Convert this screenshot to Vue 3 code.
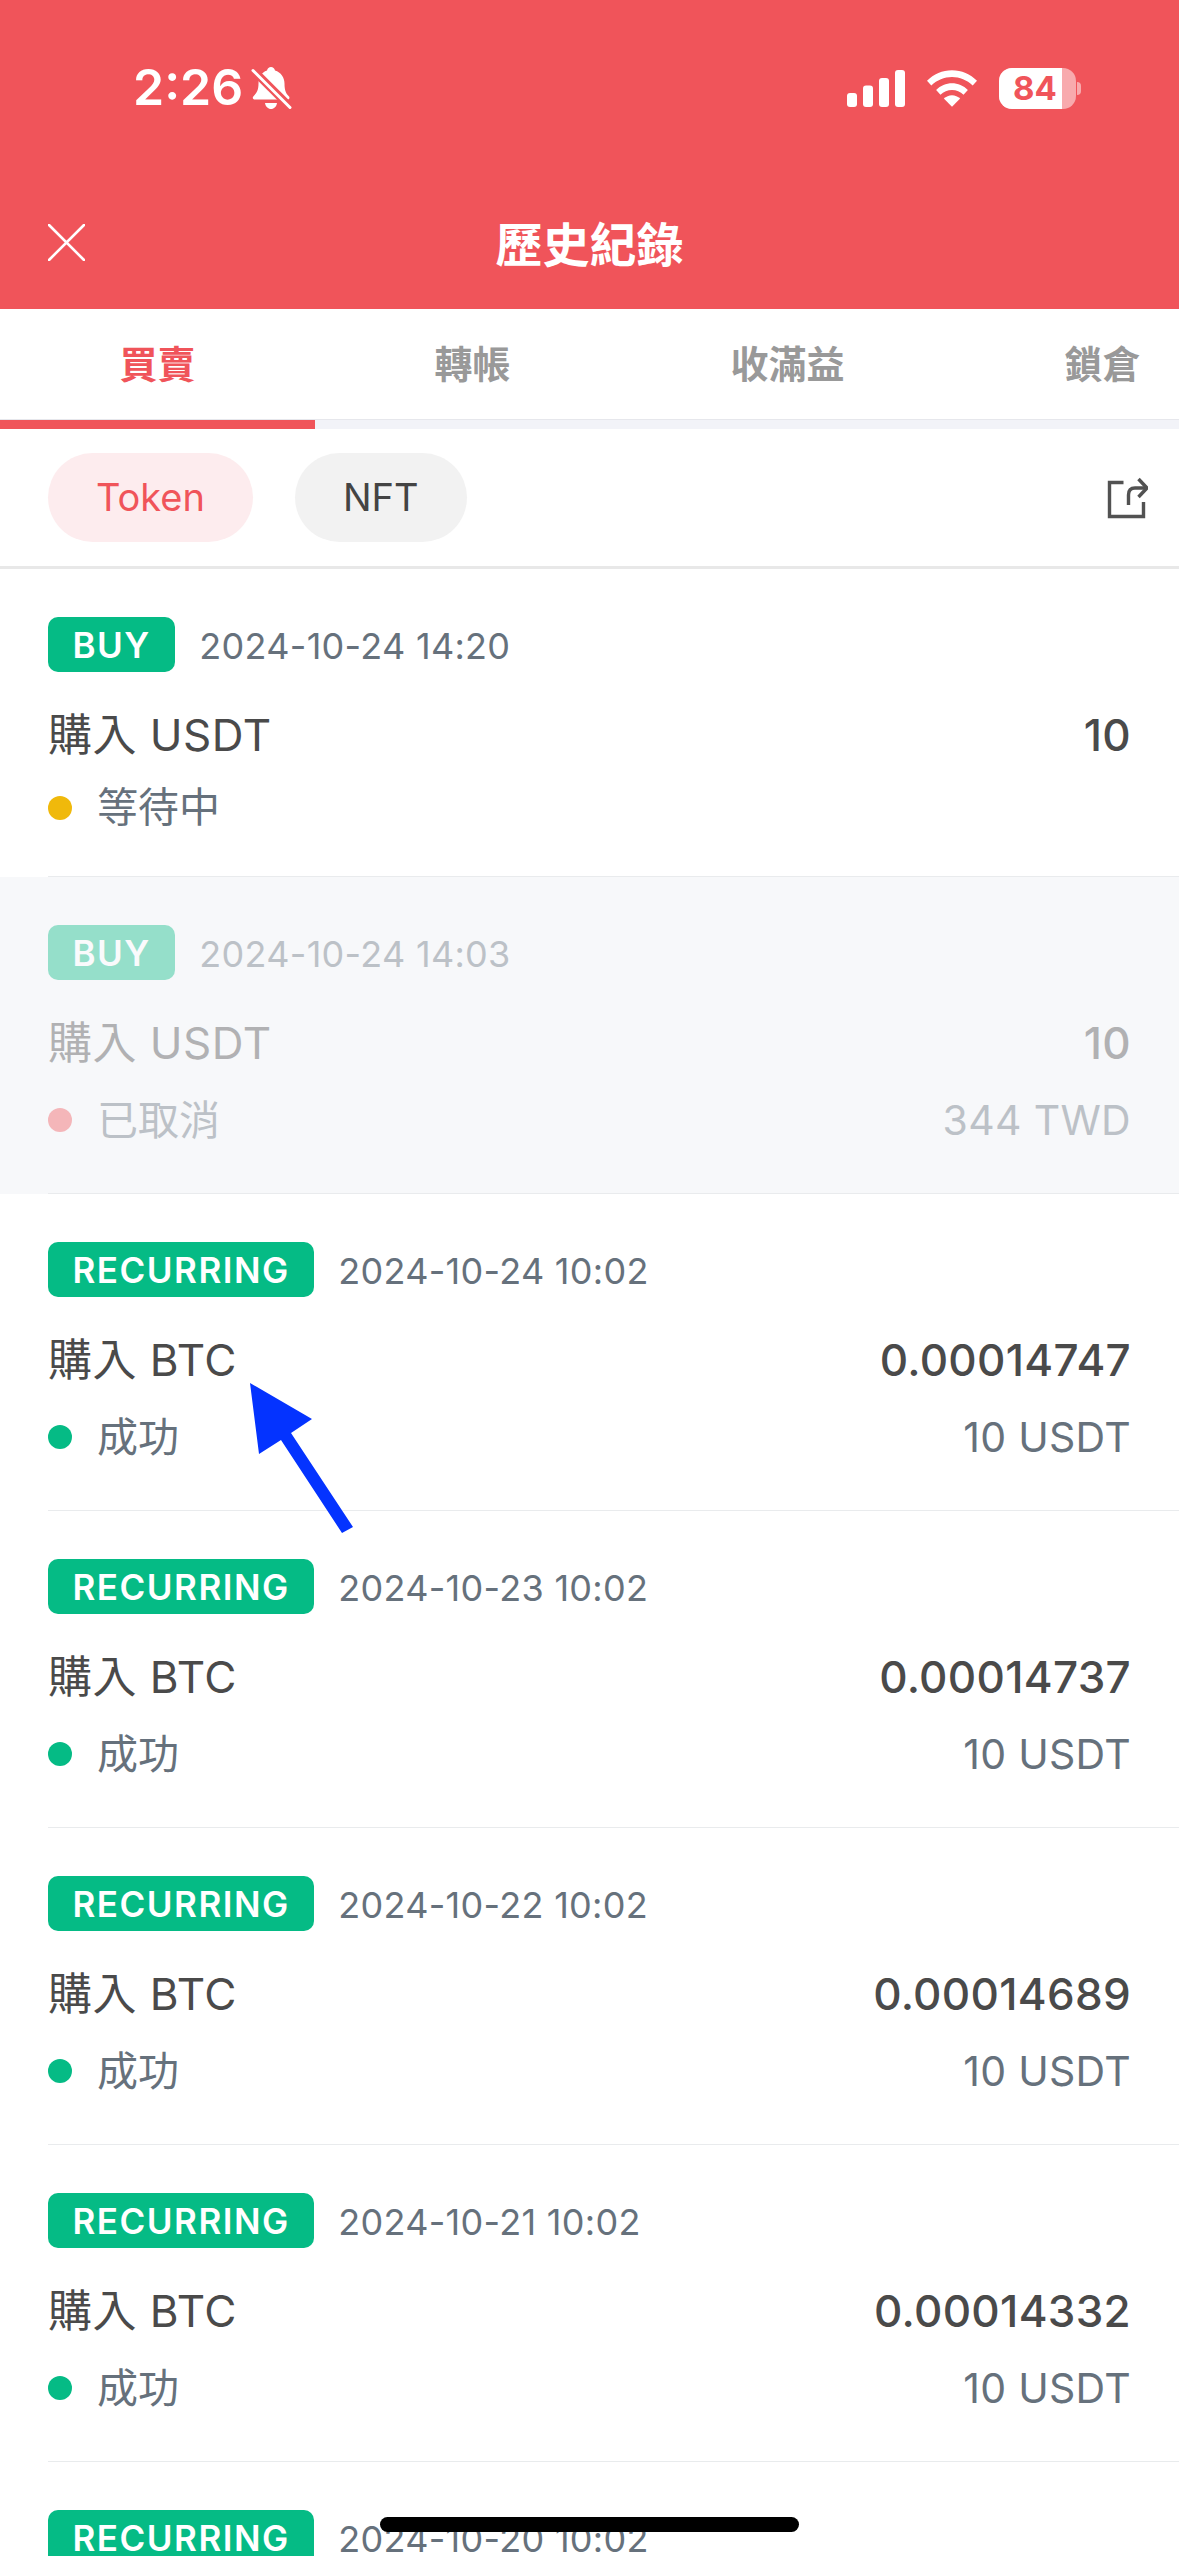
<template>
  <div class="page">
    <div class="header">
      <div class="status">
        <div class="status-left">
          <span class="clock">2:26</span>
          <svg class="bell" width="42" height="44" viewBox="0 0 42 44">
            <path d="M21 0c2 0 3.500 1.300 4 3.500 6 1.800 9.500 7 9.500 13 0 7 1.500 10 4.500 13 1 1 .3 3-1.500 3H5c-2 0-3-2-1.500-3.300 3-3 5-6 5-12.700 0-6 3-11.200 8.500-13 .5-2.200 2-3.500 4-3.500z" fill="#fff"/>
            <path d="M15 36h12c-.5 3.500-3 6-6 6s-5.500-2.500-6-6z" fill="#fff"/>
            <path d="M-2-2 44 44" stroke="#f0545a" stroke-width="8"/>
            <path d="M3 3.500 40 40.500" stroke="#fff" stroke-width="3" stroke-linecap="round"/>
          </svg>
        </div>
        <div class="status-right">
          <svg width="58" height="37" viewBox="0 0 58 37">
            <rect x="0" y="23" width="10" height="14" rx="3" fill="#fff"/>
            <rect x="16" y="15.500" width="10" height="21.500" rx="3" fill="#fff"/>
            <rect x="32" y="8" width="10" height="29" rx="3" fill="#fff"/>
            <rect x="48" y="0" width="10" height="37" rx="3" fill="#fff"/>
          </svg>
          <svg width="50" height="37" viewBox="0 0 52 38">
            <path d="M0 11C7 4 16 0 26 0s19 4 26 11l-4.500 5C41.500 10 34 7 26 7S10.500 10 4.500 16z" fill="#fff"/>
            <path d="M9.500 20.500C14 16 20 13.500 26 13.500s12 2.500 16.500 7L38 25.500C34.800 22.400 30.500 20.500 26 20.500s-8.800 1.900-12 5z" fill="#fff"/>
            <path d="M17.500 29.500c2.300-2.200 5.400-3.500 8.500-3.500s6.200 1.300 8.500 3.500L26 38z" fill="#fff"/>
          </svg>
          <div class="battery">
            <div class="battery-body">
              <span class="battery-fill"></span>
              <span class="battery-num">84</span>
            </div>
            <span class="battery-cap"></span>
          </div>
        </div>
      </div>
      <div class="nav">
        <svg class="close" width="37" height="37" viewBox="0 0 37 37">
          <path d="M1 1 36 36M36 1 1 36" stroke="#fff" stroke-width="2.600" stroke-linecap="round" fill="none"/>
        </svg>
        <span class="nav-title">歷史紀錄</span>
      </div>
    </div>

    <div class="tabs">
      <div v-for="tab in tabs" :key="tab" class="tab" :class="{ active: tab === '買賣' }">
        {{ tab }}
      </div>
    </div>

    <div class="filters">
      <div class="pill pill-on">Token</div>
      <div class="pill">NFT</div>
      <svg class="share" width="43" height="45" viewBox="0 0 43 45" fill="none" stroke="#525252" stroke-width="3.400">
        <path d="M18.500 7.500H4.500V41.500H38.500V27"/>
        <path d="M23.500 30V20Q23.500 13 30 13H40"/>
        <path d="M33.500 4 42 13 33.500 22"/>
      </svg>
    </div>

    <div class="list">
      <div v-for="item in rows" :key="item.time" class="row" :class="{ cancelled: item.state === 'cancelled' }">
        <div class="row-top">
          <span class="badge">{{ item.type }}</span>
          <span class="time">{{ item.time }}</span>
        </div>
        <template v-if="item.title">
          <div class="row-main">
            <span class="title">{{ item.title }}</span>
            <span class="amount">{{ item.amount }}</span>
          </div>
          <div class="row-sub">
            <span class="state">
              <i class="dot" :class="item.state"></i>{{ item.label }}
            </span>
            <span v-if="item.total" class="total">{{ item.total }}</span>
          </div>
        </template>
      </div>
    </div>

    <svg class="arrow" width="110" height="150" viewBox="0 0 110 150">
      <path d="M0 0 62 36 41 50 103 144 92 150 31 57 9 71z" fill="#0433ff"/>
    </svg>
    <div class="home-bar"></div>
  </div>
</template>

<script setup>
const tabs = ['買賣', '轉帳', '收滿益', '鎖倉'];

const recurring = (time, amount) => ({
  type: 'RECURRING',
  time,
  title: '購入 BTC',
  amount,
  state: 'ok',
  label: '成功',
  total: '10 USDT',
});

const rows = [
  { type: 'BUY', time: '2024-10-24 14:20', title: '購入 USDT', amount: '10', state: 'pending', label: '等待中', total: '' },
  { type: 'BUY', time: '2024-10-24 14:03', title: '購入 USDT', amount: '10', state: 'cancelled', label: '已取消', total: '344 TWD' },
  recurring('2024-10-24 10:02', '0.00014747'),
  recurring('2024-10-23 10:02', '0.00014737'),
  recurring('2024-10-22 10:02', '0.00014689'),
  recurring('2024-10-21 10:02', '0.00014332'),
  { type: 'RECURRING', time: '2024-10-20 10:02' },
];
</script>

<style>
html,
body {
  margin: 0;
  background: #fff;
}
</style>

<style scoped>
.page {
  position: relative;
  width: 1179px;
  height: 2556px;
  overflow: hidden;
  background: #fff;
  font-family: Inter, "Noto Sans CJK TC", sans-serif;
}

.header {
  height: 309px;
  background: #f0545a;
  color: #fff;
  display: flex;
  flex-direction: column;
}

.status {
  height: 130px;
  padding: 0 98px 0 133px;
  display: flex;
  align-items: center;
  justify-content: space-between;
  box-sizing: border-box;
}

.status-left {
  display: flex;
  align-items: center;
  gap: 7px;
  padding-top: 44px;
}

.bell {
  margin-top: 3px;
}

.clock {
  font-size: 50px;
  font-weight: 600;
  line-height: 1;
}

.status-right {
  display: flex;
  align-items: center;
  gap: 22px;
  padding-top: 46px;
}

.battery {
  display: flex;
  align-items: center;
  gap: 1px;
}

.battery-body {
  position: relative;
  width: 77px;
  height: 41px;
  border-radius: 13px;
  background: rgba(255, 255, 255, 0.5);
  overflow: hidden;
}

.battery-fill {
  position: absolute;
  left: 0;
  top: 0;
  bottom: 0;
  width: 63px;
  background: #fff;
}

.battery-num {
  position: absolute;
  left: 14px;
  top: 0;
  font-size: 33px;
  line-height: 41px;
  font-weight: 700;
  color: #f0545a;
}

.battery-cap {
  width: 4px;
  height: 13px;
  border-radius: 0 4px 4px 0;
  background: rgba(255, 255, 255, 0.5);
}

.nav {
  flex: 1;
  display: grid;
  grid-template-columns: 1fr auto 1fr;
  align-items: center;
  padding: 46px 0 0 48px;
  margin-right: 48px;
}

.nav-title {
  font-size: 47px;
  font-weight: 700;
  margin-top: -2px;
}

.tabs {
  height: 120px;
  box-sizing: border-box;
  display: flex;
  background: #fff;
  border-bottom: 9px solid #f2f3f8;
  box-shadow: inset 0 -1px 0 #e6e7ec;
}

.tab {
  width: 315px;
  text-align: center;
  font-size: 38px;
  font-weight: 700;
  line-height: 111px;
  color: #999;
  flex: none;
  position: relative;
}

.tab.active {
  color: #f0545a;
}

.tab.active::after {
  content: "";
  position: absolute;
  left: 0;
  right: 0;
  bottom: -9px;
  height: 9px;
  background: #f0545a;
}

.filters {
  height: 140px;
  padding: 0 31px 0 48px;
  box-sizing: border-box;
  display: flex;
  align-items: center;
  gap: 42px;
  border-bottom: 3px solid #e8e8e8;
}

.pill {
  height: 89px;
  padding: 0 48px;
  border-radius: 45px;
  background: #f2f2f2;
  color: #444;
  font-size: 38px;
  line-height: 89px;
}

.pill-on {
  background: #fdecee;
  color: #f0545a;
}

.share {
  margin-left: auto;
}

.row {
  padding: 48px 48px 46px;
  position: relative;
}

.row::after {
  content: "";
  position: absolute;
  left: 48px;
  right: 0;
  bottom: 0;
  height: 1px;
  background: #e9ebed;
}

.row.cancelled {
  background: #f7f8fa;
}

.row-top {
  display: flex;
  align-items: center;
  gap: 24px;
}

.badge {
  height: 55px;
  padding: 0 24.500px;
  border-radius: 10px;
  background: #05bb85;
  color: #fff;
  font-size: 35px;
  font-weight: 600;
  letter-spacing: 1.500px;
  line-height: 57px;
}

.time {
  font-size: 36px;
  letter-spacing: 0.300px;
  padding-top: 2px;
  color: #66717c;
}

.row-main {
  display: flex;
  justify-content: space-between;
  margin-top: 33px;
  font-size: 44px;
  line-height: 60px;
  color: #4a4a4a;
}

.title {
  letter-spacing: 0.500px;
}

.amount {
  font-weight: 500;
  letter-spacing: 0.300px;
}

.row-sub {
  display: flex;
  align-items: center;
  justify-content: space-between;
  margin-top: 19px;
  font-size: 41px;
  line-height: 47px;
  color: #66717c;
}

.total {
  letter-spacing: 0.300px;
  line-height: 56px;
}

.state {
  display: flex;
  align-items: center;
}

.dot {
  width: 24px;
  height: 24px;
  border-radius: 50%;
  margin-right: 25px;
}

.dot.ok {
  background: #05bb85;
}

.dot.pending {
  background: #f0b90b;
}

.dot.cancelled {
  background: #f0545a;
}

.cancelled .row-top,
.cancelled .row-main,
.cancelled .row-sub {
  opacity: 0.4;
}

.arrow {
  position: absolute;
  left: 250px;
  top: 1383px;
}

.home-bar {
  position: absolute;
  left: 380px;
  top: 2517px;
  width: 419px;
  height: 15px;
  border-radius: 8px;
  background: #000;
}
</style>
